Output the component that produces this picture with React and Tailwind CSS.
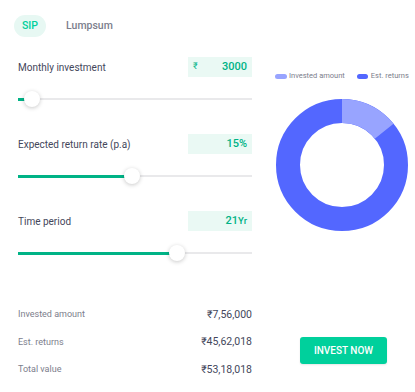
import { useState } from "react";

const green = "#00d09c";

function ValueBox({ prefix, value, suffix }) {
  return (
    <div className="flex h-[20px] w-[64px] items-center justify-between bg-[#eaf9f4] px-[5px]">
      <span className="text-[9px] text-[#00b386]">{prefix}</span>
      <span className="text-[11px] font-medium text-[#00b386]">
        {value}
        {suffix && <span className="text-[9.5px]">{suffix}</span>}
      </span>
    </div>
  );
}

function Slider({ pos }) {
  return (
    <div className="relative mt-[14px] h-[16px] w-[234px]">
      <div className="absolute left-0 right-0 top-[7px] h-[2px] bg-[#e9e9eb]" />
      <div
        className="absolute left-0 top-[7px] h-[3px] bg-[#00b386]"
        style={{ width: pos }}
      />
      <div
        className="absolute top-0 h-[16px] w-[16px] rounded-full bg-white shadow-[0_1px_4px_rgba(0,0,0,0.22)]"
        style={{ left: pos - 8 }}
      />
    </div>
  );
}

function Field({ label, prefix, value, suffix, pos, first }) {
  return (
    <div className={first ? "" : "mt-[27px]"}>
      <div className="flex h-[20px] items-center justify-between">
        <span className="text-[10px] text-[#44475b]">{label}</span>
        <ValueBox prefix={prefix} value={value} suffix={suffix} />
      </div>
      <Slider pos={pos} />
    </div>
  );
}

function Donut() {
  const r = 54;
  const c = 2 * Math.PI * r;
  const invested = 756000 / 5318018;
  return (
    <svg width="132" height="132" viewBox="0 0 132 132">
      <g transform="rotate(-90 66 66)">
        <circle cx="66" cy="66" r={r} fill="none" stroke="#5367ff" strokeWidth="24" />
        <circle
          cx="66"
          cy="66"
          r={r}
          fill="none"
          stroke="#98a4ff"
          strokeWidth="24"
          strokeDasharray={`${c * invested} ${c}`}
        />
      </g>
    </svg>
  );
}

export default function App() {
  const [tab, setTab] = useState("SIP");

  return (
    <div className="h-[392px] w-[415px] overflow-hidden bg-white font-['Roboto',sans-serif]">
      <div className="flex items-center pl-[14px] pt-[15px]">
        <button
          onClick={() => setTab("SIP")}
          className={`h-[22px] rounded-full px-[8px] text-[10.5px] font-medium ${
            tab === "SIP" ? "bg-[#e7f8f3] text-[#00d09c]" : "text-[#7c7e8c]"
          }`}
        >
          SIP
        </button>
        <button
          onClick={() => setTab("Lumpsum")}
          className={`ml-[12px] h-[22px] rounded-full px-[8px] text-[10.5px] font-medium ${
            tab === "Lumpsum" ? "bg-[#e7f8f3] text-[#00d09c]" : "text-[#7c7e8c]"
          }`}
        >
          Lumpsum
        </button>
      </div>

      <div className="mt-[20px] flex">
        <div className="ml-[18px] w-[234px] shrink-0">
          <Field first label="Monthly investment" prefix="₹" value="3000" pos={14} />
          <Field label="Expected return rate (p.a)" value="15%" pos={114} />
          <Field label="Time period" value="21" suffix="Yr" pos={159} />
        </div>
        <div className="ml-[23px] flex shrink-0 flex-col">
          <div className="mt-[14px] flex h-[10px] items-center whitespace-nowrap text-[7.5px] text-[#7c7e8c]">
            <span className="h-[5px] w-[12px] rounded-full bg-[#98a4ff]" />
            <span className="ml-[2px]">Invested amount</span>
            <span className="ml-[12px] h-[5px] w-[11px] rounded-full bg-[#5367ff]" />
            <span className="ml-[3px]">Est. returns</span>
          </div>
          <div className="ml-[1px] mt-[18px]">
            <Donut />
          </div>
        </div>
      </div>

      <div className="mt-[40px] flex">
        <div className="ml-[18px] w-[234px] shrink-0">
          {[
            ["Invested amount", "₹7,56,000"],
            ["Est. returns", "₹45,62,018"],
            ["Total value", "₹53,18,018"],
          ].map(([k, v]) => (
            <div key={k} className="flex h-[27.5px] items-center justify-between">
              <span className="text-[9px] text-[#7c7e8c]">{k}</span>
              <span className="text-[10.5px] text-[#44475b]">{v}</span>
            </div>
          ))}
        </div>
        <div className="ml-[48px] mt-[36px]">
          <button
            className="h-[27px] w-[87px] rounded-[3px] text-[10px] font-medium text-white shadow-[0_1px_2px_rgba(0,0,0,0.1)]"
            style={{ backgroundColor: green }}
          >
            INVEST NOW
          </button>
        </div>
      </div>
    </div>
  );
}
